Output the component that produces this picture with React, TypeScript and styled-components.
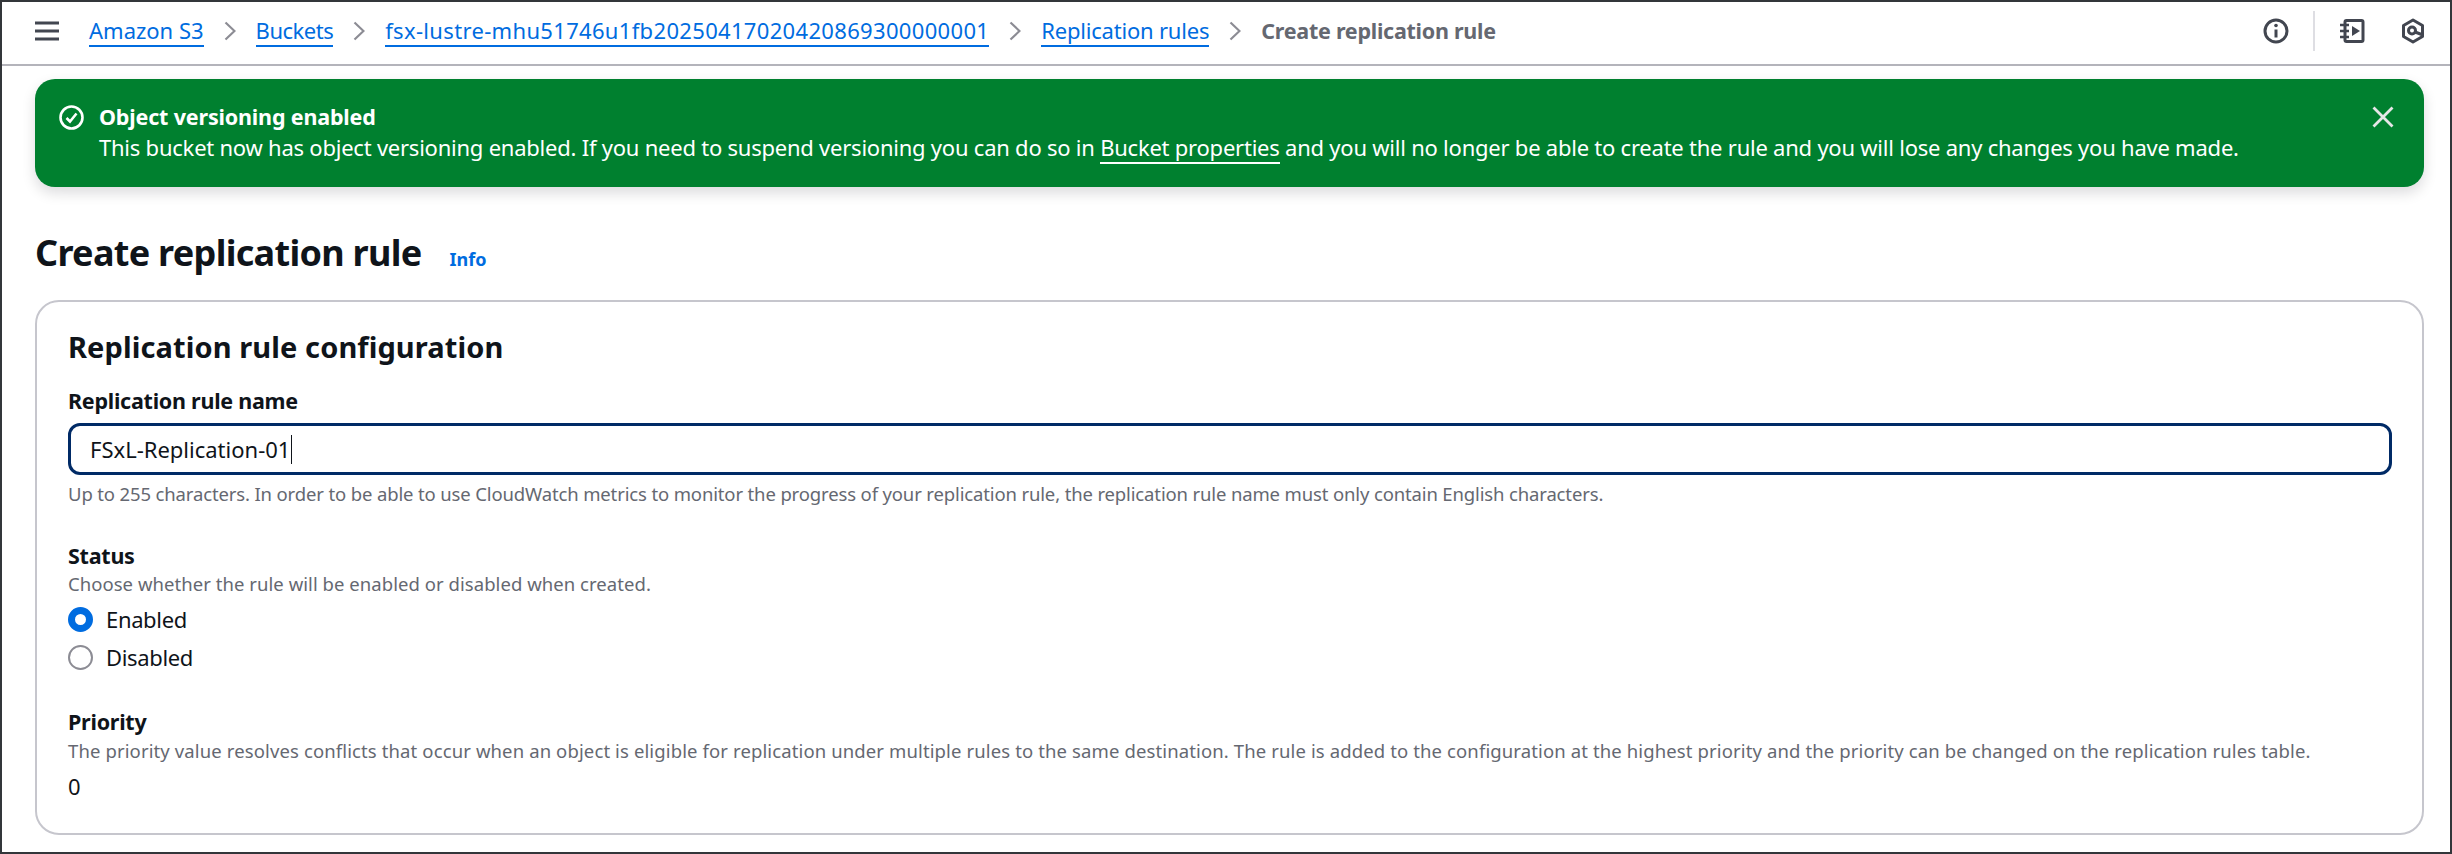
import styled, { createGlobalStyle } from 'styled-components';

const GlobalStyle = createGlobalStyle`
  html, body {
    margin: 0;
    padding: 0;
    background: #ffffff;
  }
  body {
    font-family: 'Noto Sans', 'Open Sans', sans-serif;
    color: #0f141a;
  }
`;

type CrumbType = { label: string; spacing: number };

const crumbs: CrumbType[] = [
  { label: 'Amazon S3', spacing: 0 },
  { label: 'Buckets', spacing: -0.5 },
  { label: 'fsx-lustre-mhu51746u1fb20250417020420869300000001', spacing: 0.33 },
  { label: 'Replication rules', spacing: -0.2 },
];

const MenuIcon = () => (
  <svg width="24" height="20" viewBox="0 0 24 20" fill="none" stroke="#424650" strokeWidth="3">
    <path d="M0 2h24M0 10h24M0 18h24" />
  </svg>
);

const ChevronIcon = () => (
  <svg width="12" height="20" viewBox="0 0 12 20" fill="none" stroke="#8c8c94" strokeWidth="2.2">
    <path d="M1.5 1.5l9 8.5-9 8.5" />
  </svg>
);

const InfoIcon = () => (
  <svg width="26" height="26" viewBox="0 0 26 26" fill="none" stroke="#424650" strokeWidth="3">
    <circle cx="13" cy="13" r="11" />
    <path d="M13 11.5v8" />
    <circle cx="13" cy="7.5" r="1.8" fill="#424650" stroke="none" />
  </svg>
);

const NotebookIcon = () => (
  <svg width="26" height="26" viewBox="0 0 26 26" fill="none" stroke="#424650" strokeWidth="3">
    <rect x="6" y="2.5" width="18" height="21" rx="1.5" />
    <path d="M1 7h9M1 13h9M1 19h9" strokeWidth="2.6" />
    <path d="M13 8l8 5-8 5z" fill="#424650" stroke="none" />
  </svg>
);

const HexagonIcon = () => (
  <svg width="24" height="26" viewBox="0 0 24 26" fill="none" stroke="#424650" strokeWidth="3">
    <path d="M12 2l9.5 5.5v11L12 24l-9.5-5.5v-11z" strokeLinejoin="round" />
    <circle cx="11" cy="12.5" r="3.5" />
    <path d="M14 14l8 3" />
  </svg>
);

const SuccessIcon = () => (
  <svg width="25" height="25" viewBox="0 0 25 25" fill="none" stroke="#ffffff" strokeWidth="2.6">
    <circle cx="12.5" cy="12.5" r="11" />
    <path d="M7.5 13l3.5 3.5 6.5-8" strokeWidth="2.6" />
  </svg>
);

const CloseIcon = () => (
  <svg width="22" height="22" viewBox="0 0 22 22" fill="none" stroke="#e6e6e8" strokeWidth="2.8">
    <path d="M1.5 1.5l19 19M20.5 1.5l-19 19" />
  </svg>
);

export default function App() {
  return (
    <>
      <GlobalStyle />
      <Frame>
        <Header>
          <MenuButton>
            <MenuIcon />
          </MenuButton>
          <Breadcrumbs>
            {crumbs.map((crumb) => (
              <Crumb key={crumb.label}>
                <CrumbLink href="#" $spacing={crumb.spacing}>
                  {crumb.label}
                </CrumbLink>
                <ChevronIcon />
              </Crumb>
            ))}
            <CurrentCrumb>Create replication rule</CurrentCrumb>
          </Breadcrumbs>
          <HeaderActions>
            <InfoIcon />
            <Divider />
            <NotebookIcon />
            <HexagonSlot>
              <HexagonIcon />
            </HexagonSlot>
          </HeaderActions>
        </Header>
        <Content>
          <Banner>
            <BannerIcon>
              <SuccessIcon />
            </BannerIcon>
            <BannerBody>
              <BannerTitle>Object versioning enabled</BannerTitle>
              <BannerText>
                This bucket now has object versioning enabled. If you need to suspend versioning you can do so in{' '}
                <BannerLink href="#">Bucket properties</BannerLink> and you will no longer be able to create the rule
                and you will lose any changes you have made.
              </BannerText>
            </BannerBody>
            <BannerClose>
              <CloseIcon />
            </BannerClose>
          </Banner>
          <PageTitleRow>
            <PageTitle>Create replication rule</PageTitle>
            <InfoLink href="#">Info</InfoLink>
          </PageTitleRow>
          <Card>
            <CardTitle>Replication rule configuration</CardTitle>
            <FieldLabel $top={21}>Replication rule name</FieldLabel>
            <NameInput>
              FSxL-Replication-01
              <Caret />
            </NameInput>
            <Hint $top={6} $spacing={-0.14}>
              Up to 255 characters. In order to be able to use CloudWatch metrics to monitor the progress of your
              replication rule, the replication rule name must only contain English characters.
            </Hint>
            <FieldLabel $top={34}>Status</FieldLabel>
            <Hint $spacing={0.05}>Choose whether the rule will be enabled or disabled when created.</Hint>
            <RadioGroup>
              <RadioRow>
                <Radio $checked />
                Enabled
              </RadioRow>
              <RadioRow>
                <Radio />
                Disabled
              </RadioRow>
            </RadioGroup>
            <FieldLabel $top={31}>Priority</FieldLabel>
            <Hint $top={1} $spacing={0.12}>
              The priority value resolves conflicts that occur when an object is eligible for replication under multiple
              rules to the same destination. The rule is added to the configuration at the highest priority and the
              priority can be changed on the replication rules table.
            </Hint>
            <PriorityValue>0</PriorityValue>
          </Card>
        </Content>
      </Frame>
    </>
  );
}

const Frame = styled.div`
  box-sizing: border-box;
  width: 2452px;
  height: 854px;
  overflow: hidden;
  background: #ffffff;
  border: 2px solid #33363a;
`;

const Header = styled.header`
  box-sizing: border-box;
  display: flex;
  align-items: center;
  height: 64px;
  padding: 0 25px 4px 33px;
  border-bottom: 2px solid #b4b4bb;
`;

const MenuButton = styled.div`
  display: flex;
  width: 54px;
`;

const Breadcrumbs = styled.nav`
  display: flex;
  align-items: center;
  gap: 20px;
  flex: 1;
  font-size: 22px;
  line-height: 30px;
`;

const Crumb = styled.span`
  display: flex;
  align-items: center;
  gap: 20px;
`;

const CrumbLink = styled.a<{ $spacing: number }>`
  color: #006ce0;
  text-decoration: none;
  border-bottom: 2px solid #006ce0;
  letter-spacing: ${(props) => props.$spacing}px;
`;

const CurrentCrumb = styled.span`
  color: #656871;
  font-size: 21.5px;
  font-weight: 700;
  letter-spacing: -0.26px;
`;

const HeaderActions = styled.div`
  display: flex;
  align-items: center;
  gap: 24px;
`;

const HexagonSlot = styled.div`
  display: flex;
  margin-left: 12px;
`;

const Divider = styled.span`
  width: 2px;
  height: 40px;
  background: #dedee3;
`;

const Content = styled.main`
  padding: 13px 26px 0 33px;
`;

const Banner = styled.section`
  box-sizing: border-box;
  display: flex;
  height: 108px;
  padding: 23px 30px 0 24px;
  border-radius: 20px;
  background: #00802f;
  color: #ffffff;
  box-shadow: 0 6px 14px rgba(0, 7, 22, 0.14);
`;

const BannerIcon = styled.div`
  width: 40px;
  height: 30px;
  display: flex;
  align-items: center;
`;

const BannerBody = styled.div`
  flex: 1;
`;

const BannerTitle = styled.div`
  font-size: 21.5px;
  font-weight: 700;
  line-height: 30px;
  letter-spacing: -0.17px;
`;

const BannerText = styled.div`
  font-size: 22px;
  line-height: 31px;
  letter-spacing: -0.23px;
`;

const BannerLink = styled.a`
  color: #ffffff;
  text-decoration: none;
  border-bottom: 2px solid #ffffff;
`;

const BannerClose = styled.div`
  display: flex;
  align-items: center;
  height: 30px;
`;

const PageTitleRow = styled.div`
  display: flex;
  align-items: baseline;
  gap: 28px;
  margin-top: 44px;
  height: 44px;
`;

const PageTitle = styled.h1`
  margin: 0;
  font-size: 36px;
  font-weight: 700;
  line-height: 44px;
  letter-spacing: -0.7px;
`;

const InfoLink = styled.a`
  color: #006ce0;
  font-size: 18px;
  font-weight: 700;
  text-decoration: none;
`;

const Card = styled.section`
  box-sizing: border-box;
  height: 535px;
  margin-top: 25px;
  padding: 27px 30px 0 31px;
  border: 2px solid #c6c6cd;
  border-radius: 24px;
`;

const CardTitle = styled.h2`
  margin: 0;
  font-size: 29px;
  font-weight: 700;
  line-height: 36px;
  letter-spacing: 0.1px;
`;

const FieldLabel = styled.div<{ $top?: number }>`
  margin-top: ${(props) => props.$top ?? 0}px;
  font-size: 21.5px;
  font-weight: 700;
  line-height: 30px;
  letter-spacing: -0.25px;
`;

const NameInput = styled.div`
  box-sizing: border-box;
  display: flex;
  align-items: center;
  height: 52px;
  margin-top: 7px;
  padding: 0 19px;
  border: 3px solid #002a66;
  border-radius: 12px;
  font-size: 22px;
`;

const Caret = styled.span`
  width: 1px;
  height: 29px;
  margin-left: 1px;
  background: #0f141a;
`;

const Hint = styled.div<{ $top?: number; $spacing: number }>`
  margin-top: ${(props) => props.$top ?? 0}px;
  color: #656871;
  font-size: 18.5px;
  line-height: 26px;
  letter-spacing: ${(props) => props.$spacing}px;
`;

const RadioGroup = styled.div`
  margin-top: 3px;
`;

const RadioRow = styled.label`
  display: flex;
  align-items: center;
  gap: 13px;
  height: 38px;
  font-size: 22px;
  letter-spacing: -0.35px;
`;

const Radio = styled.span<{ $checked?: boolean }>`
  box-sizing: border-box;
  width: 25px;
  height: 25px;
  border-radius: 50%;
  border: ${(props) => (props.$checked ? '7px solid #006ce0' : '2.5px solid #8c8c94')};
`;

const PriorityValue = styled.div`
  margin-top: 7px;
  font-size: 22px;
  line-height: 30px;
`;
